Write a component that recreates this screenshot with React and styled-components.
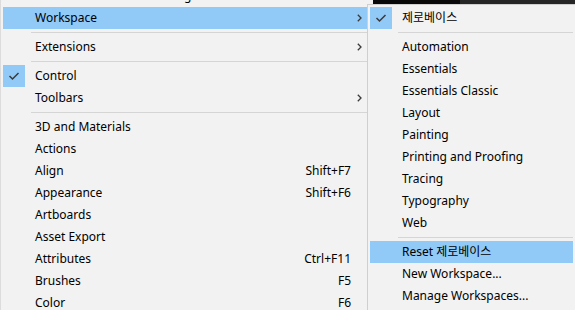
import React from 'react';
import styled, { createGlobalStyle } from 'styled-components';

const GlobalStyle = createGlobalStyle`
	html, body {
		margin: 0;
		padding: 0;
		background: #f2f2f2;
		overflow: hidden;
	}
	body {
		font-family: "Noto Sans", "Noto Sans CJK KR", sans-serif;
		font-size: 12px;
		color: #000;
	}
`;

const Screen = styled.div`
	display: flex;
	flex-direction: row;
	align-items: flex-start;
	width: 575px;
	height: 310px;
	overflow: hidden;
`;

const MainMenu = styled.div`
	width: 364px;
	flex-shrink: 0;
	margin-top: -15px;
	padding-left: 2px;
	border-left: 1px solid #dcdcdc;
	background: #f2f2f2;
`;

const SubColumn = styled.div`
	display: flex;
	flex-direction: column;
	flex-shrink: 0;
`;

const AppStrip = styled.div`
	height: 4px;
	flex-shrink: 0;
	margin-left: 6px;
	display: flex;
	div:first-child {
		width: 87px;
		background: #080808;
	}
	div:last-child {
		flex: 1;
		background: #262626;
	}
`;

const SubMenu = styled.div`
	width: 203px;
	flex-shrink: 0;
	padding: 2px 2px 4px 2px;
	border: 1px solid #cfcfcf;
	background: #f2f2f2;
`;

const Row = styled.div`
	display: grid;
	grid-template-columns: 22px 1fr auto 16px;
	height: 22px;
	line-height: 22px;
	background: ${({ $active }) => ($active ? '#91c9f7' : 'transparent')};
	white-space: nowrap;
`;

const CheckBox = styled.span`
	display: flex;
	align-items: center;
	justify-content: center;
	width: 22px;
	height: 22px;
	background: ${({ $on }) => ($on ? '#91c9f7' : 'transparent')};
`;

const Label = styled.span`
	padding-left: 10px;
	overflow: hidden;
`;

const Shortcut = styled.span`
	text-align: right;
`;

const Arrow = styled.span`
	display: flex;
	align-items: center;
	justify-content: center;
`;

const Separator = styled.div`
	height: 7px;
	margin-left: 28px;
	display: flex;
	align-items: center;
	&::after {
		content: '';
		flex: 1;
		height: 1px;
		background: #d5d5d5;
	}
`;

const Check = () => (
	<svg width="12" height="10" viewBox="0 0 12 10">
		<path d="M1.5 5 L4.5 8 L10.5 2" fill="none" stroke="#3a3a3a" strokeWidth="1.5" />
	</svg>
);

const Chevron = () => (
	<svg width="5" height="8" viewBox="0 0 5 8">
		<path d="M0.8 0.8 L4 4 L0.8 7.2" fill="none" stroke="#3a3a3a" strokeWidth="1.3" />
	</svg>
);

const MenuItem = ({ label, shortcut, checked, active, submenu }) => (
	<Row $active={active}>
		<CheckBox $on={checked}>{checked && <Check />}</CheckBox>
		<Label>{label}</Label>
		<Shortcut>{shortcut}</Shortcut>
		<Arrow>{submenu && <Chevron />}</Arrow>
	</Row>
);

const panels = [
	{ label: '3D and Materials' },
	{ label: 'Actions' },
	{ label: 'Align', shortcut: 'Shift+F7' },
	{ label: 'Appearance', shortcut: 'Shift+F6' },
	{ label: 'Artboards' },
	{ label: 'Asset Export' },
	{ label: 'Attributes', shortcut: 'Ctrl+F11' },
	{ label: 'Brushes', shortcut: 'F5' },
	{ label: 'Color', shortcut: 'F6' },
];

const workspaces = [
	'Automation',
	'Essentials',
	'Essentials Classic',
	'Layout',
	'Painting',
	'Printing and Proofing',
	'Tracing',
	'Typography',
	'Web',
];

const App = () => (
	<Screen>
		<GlobalStyle />
		<MainMenu>
			<MenuItem label="Find Extensions on Exchange..." />
			<MenuItem label="Workspace" active submenu />
			<Separator />
			<MenuItem label="Extensions" submenu />
			<Separator />
			<MenuItem label="Control" checked />
			<MenuItem label="Toolbars" submenu />
			<Separator />
			{panels.map((item) => (
				<MenuItem key={item.label} label={item.label} shortcut={item.shortcut} />
			))}
		</MainMenu>
		<SubColumn>
			<AppStrip>
				<div />
				<div />
			</AppStrip>
			<SubMenu>
				<MenuItem label="제로베이스" checked />
				<Separator />
				{workspaces.map((name) => (
					<MenuItem key={name} label={name} />
				))}
				<Separator />
				<MenuItem label="Reset 제로베이스" active />
				<MenuItem label="New Workspace..." />
				<MenuItem label="Manage Workspaces..." />
			</SubMenu>
		</SubColumn>
	</Screen>
);

export default App;
